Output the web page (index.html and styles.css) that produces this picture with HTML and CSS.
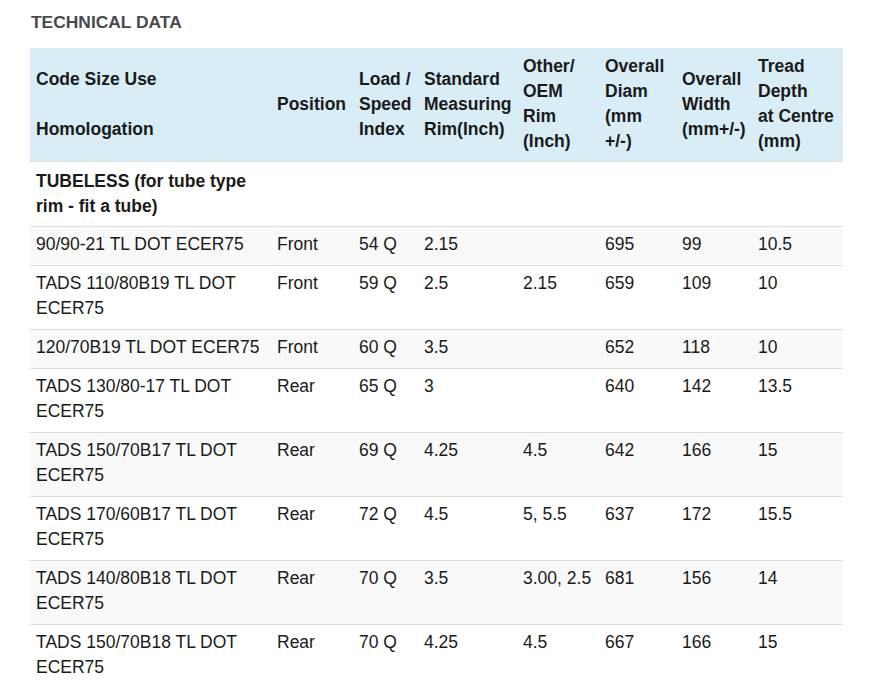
FILE: index.html
```html
<!DOCTYPE html>
<html>
<head>
<meta charset="utf-8">
<link rel="stylesheet" href="styles.css">
</head>
<body>
<h3 class="title">TECHNICAL DATA</h3>
<table class="spec">
  <colgroup>
    <col class="c1"><col class="c2"><col class="c3"><col class="c4"><col class="c5"><col class="c6"><col class="c7"><col class="c8">
  </colgroup>
  <thead>
    <tr>
      <th>Code Size Use<br><br>Homologation</th>
      <th>Position</th>
      <th>Load /<br>Speed<br>Index</th>
      <th>Standard<br>Measuring<br>Rim(Inch)</th>
      <th>Other/<br>OEM<br>Rim<br>(Inch)</th>
      <th>Overall<br>Diam<br>(mm<br>+/-)</th>
      <th>Overall<br>Width<br>(mm+/-)</th>
      <th>Tread<br>Depth<br>at Centre<br>(mm)</th>
    </tr>
  </thead>
  <tbody>
    <tr><td class="group">TUBELESS (for tube type rim - fit a tube)</td><td></td><td></td><td></td><td></td><td></td><td></td><td></td></tr>
    <tr><td>90/90-21 TL DOT ECER75</td><td>Front</td><td>54 Q</td><td>2.15</td><td></td><td>695</td><td>99</td><td>10.5</td></tr>
    <tr><td>TADS 110/80B19 TL DOT ECER75</td><td>Front</td><td>59 Q</td><td>2.5</td><td>2.15</td><td>659</td><td>109</td><td>10</td></tr>
    <tr><td>120/70B19 TL DOT ECER75</td><td>Front</td><td>60 Q</td><td>3.5</td><td></td><td>652</td><td>118</td><td>10</td></tr>
    <tr><td>TADS 130/80-17 TL DOT ECER75</td><td>Rear</td><td>65 Q</td><td>3</td><td></td><td>640</td><td>142</td><td>13.5</td></tr>
    <tr><td>TADS 150/70B17 TL DOT ECER75</td><td>Rear</td><td>69 Q</td><td>4.25</td><td>4.5</td><td>642</td><td>166</td><td>15</td></tr>
    <tr><td>TADS 170/60B17 TL DOT ECER75</td><td>Rear</td><td>72 Q</td><td>4.5</td><td>5, 5.5</td><td>637</td><td>172</td><td>15.5</td></tr>
    <tr><td>TADS 140/80B18 TL DOT ECER75</td><td>Rear</td><td>70 Q</td><td>3.5</td><td>3.00, 2.5</td><td>681</td><td>156</td><td>14</td></tr>
    <tr><td>TADS 150/70B18 TL DOT ECER75</td><td>Rear</td><td>70 Q</td><td>4.25</td><td>4.5</td><td>667</td><td>166</td><td>15</td></tr>
  </tbody>
</table>
</body>
</html>
```
FILE: styles.css
```css
html, body {
  margin: 0;
  padding: 0;
  background: #ffffff;
}
body {
  padding: 0 34px 0 30px;
  font-family: "Liberation Sans", Arial, sans-serif;
  color: #1a1a1a;
}
.title {
  margin: 0;
  padding: 12px 0 0 1px;
  height: 36px;
  box-sizing: border-box;
  font-size: 17.4px;
  line-height: 20px;
  font-weight: bold;
  color: #4a4a4a;
}
.spec {
  width: 813px;
  margin-top: 12px;
  border-collapse: collapse;
  table-layout: fixed;
  font-size: 17.5px;
  line-height: 25px;
}
.c1 { width: 241px; }
.c2 { width: 82px; }
.c3 { width: 65px; }
.c4 { width: 99px; }
.c5 { width: 82px; }
.c6 { width: 77px; }
.c7 { width: 76px; }
.c8 { width: 91px; }
.spec th,
.spec td {
  padding: 5px 6px 8px;
  text-align: left;
  vertical-align: top;
}
.spec thead th {
  background: #d9edf7;
  vertical-align: middle;
  font-weight: bold;
  border-bottom: 1px solid #dddddd;
  padding-top: 6px;
  padding-bottom: 7px;
}
.spec tbody td {
  border-top: 1px solid #dddddd;
}
.spec tbody tr:first-child td {
  border-top: none;
  padding-top: 7px;
  padding-bottom: 7px;
}
.spec tbody tr:nth-child(even) td {
  background: #f9f9f9;
}
.spec td.group {
  font-weight: bold;
}
```
